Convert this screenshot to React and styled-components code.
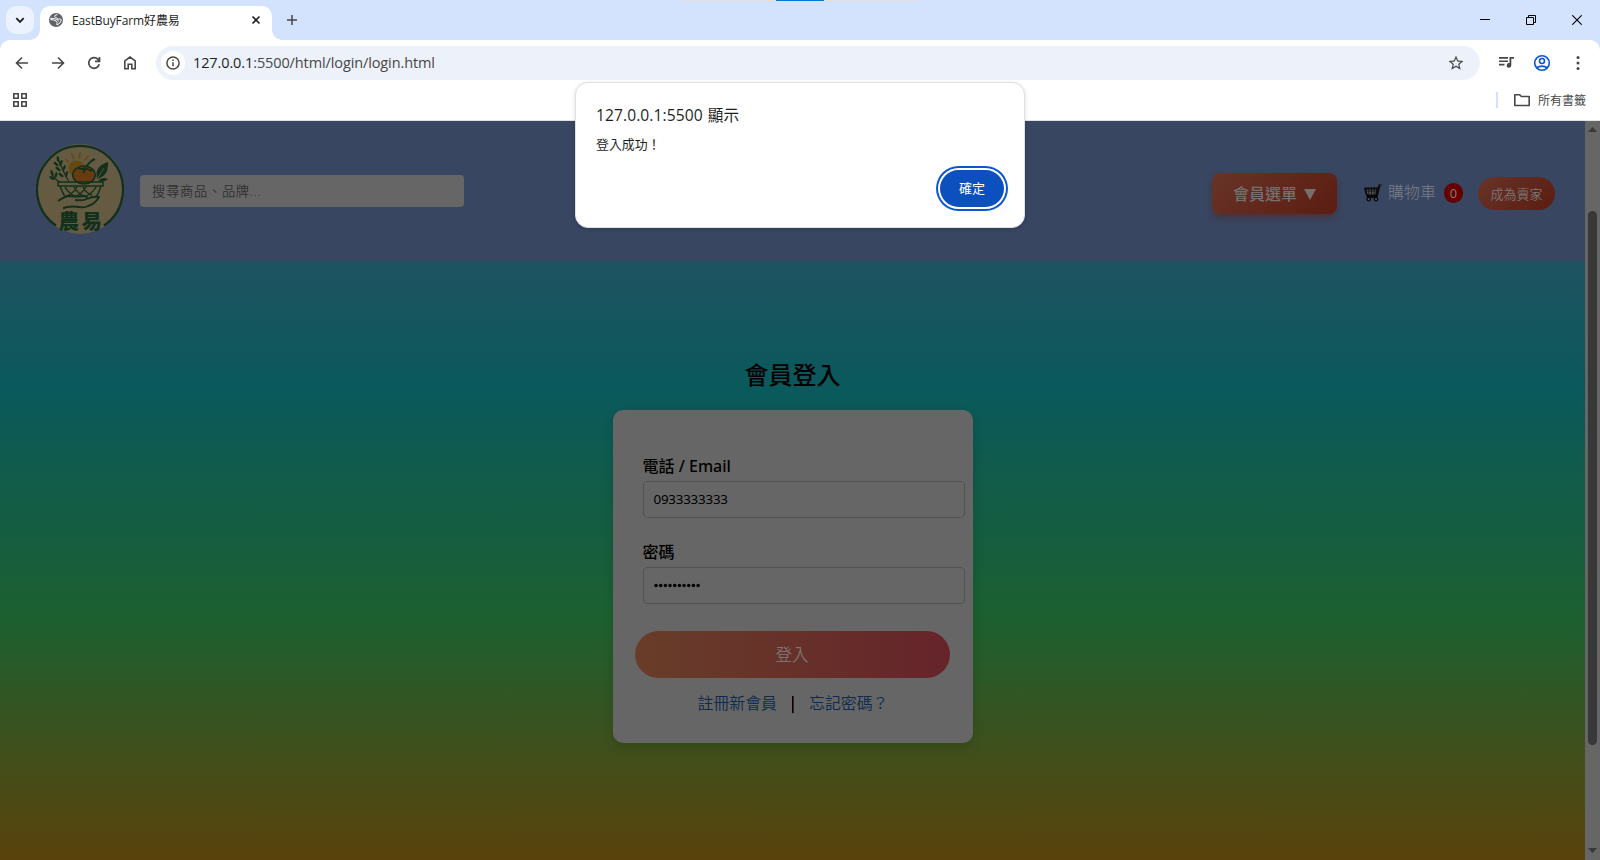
import React from "react";
import styled, { createGlobalStyle } from "styled-components";

const Global = createGlobalStyle`
  * { box-sizing: border-box; }
  body { margin: 0; overflow: hidden; font-family: "Open Sans", "Noto Sans CJK TC", sans-serif; }
  svg { display: block; flex: none; }
`;

const Window = styled.div`
  position: relative;
  display: flex;
  flex-direction: column;
  width: 1600px;
  height: 860px;
  overflow: hidden;
  background: #d3e2fd;
`;

const CaptureBar = styled.div`
  position: absolute;
  top: 0;
  left: 680px;
  width: 241px;
  height: 1px;
  background: #e3e3e3;
  display: flex;
  padding-left: 96px;
  &::after { content: ""; width: 48px; background: #0078d7; }
`;

const TabStrip = styled.div`
  display: flex;
  height: 40px;
  padding-left: 6px;
  color: #1f1f1f;
`;

const TabSearch = styled.div`
  width: 28px;
  height: 28px;
  margin: 6px 6px 0 0;
  border-radius: 10px;
  background: #ecf2fe;
  display: grid;
  place-items: center;
`;

const Tab = styled.div`
  position: relative;
  display: flex;
  align-items: center;
  width: 232px;
  height: 34px;
  margin-top: 6px;
  padding: 0 10px 6px 9px;
  border-radius: 10px 10px 0 0;
  background: #fff;
  &::before, &::after {
    content: "";
    position: absolute;
    bottom: 0;
    width: 10px;
    height: 10px;
  }
  &::before { left: -10px; background: radial-gradient(circle at 0 0, transparent 9.5px, #fff 10px); }
  &::after { right: -10px; background: radial-gradient(circle at 100% 0, transparent 9.5px, #fff 10px); }
`;

const TabTitle = styled.span`
  flex: 1;
  margin: 2px 0 0 9px;
  font-size: 12px;
  line-height: 16px;
  letter-spacing: -0.12px;
  white-space: nowrap;
`;

const NewTab = styled.div`
  display: flex;
  padding: 14px 0 0 14px;
  color: #474747;
`;

const WindowButtons = styled.div`
  display: flex;
  margin-left: auto;
  color: #000;
  > span { width: 46px; height: 39px; display: grid; place-items: center; }
`;

const Toolbar = styled.div`
  display: flex;
  align-items: center;
  height: 46px;
  padding: 0 12px 0 12px;
  background: #fff;
  border-radius: 10px 10px 0 0;
`;

const NavButtons = styled.div`
  display: flex;
  gap: 16px;
  width: 144px;
  color: #474747;
`;

const Omnibox = styled.div`
  display: flex;
  align-items: center;
  width: 1324px;
  height: 34px;
  padding: 0 15px 0 5px;
  border-radius: 17px;
  background: #ecf1fa;
  color: #474747;
`;

const SiteInfo = styled.span`
  width: 24px;
  height: 24px;
  border-radius: 50%;
  background: #fff;
  display: grid;
  place-items: center;
`;

const Url = styled.span`
  flex: 1;
  margin-left: 8px;
  font-size: 14.5px;
  line-height: 20px;
  letter-spacing: -0.11px;
  b { font-weight: 400; color: #1f1f1f; }
`;

const ToolbarActions = styled.div`
  display: flex;
  flex: 1;
  justify-content: space-between;
  align-items: center;
  padding-left: 16px;
  color: #474747;
`;

const Bookmarks = styled.div`
  display: flex;
  align-items: center;
  height: 35px;
  padding: 0 14px 6px 10px;
  background: #fff;
  border-bottom: 1px solid #e0e3e1;
  color: #474747;
`;

const BookmarkDivider = styled.i`
  width: 2px;
  height: 16px;
  margin: 0 14px 0 auto;
  background: #d3e3fd;
`;

const BookmarkLabel = styled.span`
  margin: 1px 0 0 6px;
  font-size: 12px;
  line-height: 16px;
`;

const Viewport = styled.div`
  display: flex;
  flex: 1;
`;

const Page = styled.main`
  width: 1585px;
  display: flex;
  flex-direction: column;
`;

const Header = styled.header`
  display: flex;
  align-items: center;
  height: 140px;
  padding: 0 30px 0 36px;
  background: #384662;
  color: #7a7f88;
`;

const SearchBox = styled.div`
  width: 324px;
  height: 32px;
  margin: -1px auto 0 16px;
  padding: 0 12px;
  border-radius: 4px;
  background: #666;
  color: #303030;
  font-size: 13.33px;
  line-height: 32px;
  font-weight: 350;
  letter-spacing: 0.65px;
`;

const MemberMenu = styled.div`
  width: 125px;
  height: 41px;
  margin-top: 5px;
  border-radius: 8px;
  background: linear-gradient(135deg, #673428, #5c1c11);
  box-shadow: 0 4px 6px rgba(92, 28, 17, 0.45);
  color: #74706f;
  font-size: 16px;
  font-weight: 500;
  line-height: 42px;
  text-align: center;
`;

const MenuArrow = styled.span`
  display: inline-block;
  margin-left: 7px;
  border: 6px solid transparent;
  border-top: 11px solid #74706f;
  border-bottom: 0;
`;

const Cart = styled.div`
  display: flex;
  align-items: center;
  width: 114px;
  margin: 4px 0 0 27px;
  font-size: 16px;
  font-weight: 300;
`;

const CartText = styled.span`
  margin: -3px 8px 0 6px;
  line-height: 24px;
`;

const CartCount = styled.span`
  width: 19px;
  height: 20px;
  border-radius: 10px;
  background: #660000;
  color: #8a7a7a;
  font-size: 12.8px;
  font-weight: 400;
  line-height: 20px;
  text-align: center;
`;

const SellerButton = styled.div`
  width: 77px;
  height: 33px;
  margin-top: 5px;
  border-radius: 17px;
  background: linear-gradient(135deg, #673428, #5c1c11);
  color: #7b7776;
  font-size: 13px;
  font-weight: 350;
  line-height: 34px;
  text-align: center;
`;

const Body = styled.section`
  flex: 1;
  display: flex;
  flex-direction: column;
  align-items: center;
  background: linear-gradient(#1f5361 0, #0a595c 127px, #1c6030 357px, #454d18 511px, #5a420c 599px);
`;

const Heading = styled.h2`
  margin: 94px 0 15px;
  font-size: 24px;
  line-height: 40px;
  font-weight: 500;
  color: #000;
`;

const Card = styled.div`
  width: 360px;
  height: 333px;
  padding: 44px 22px 0;
  border-radius: 10px;
  background: #666;
  box-shadow: 0 4px 12px rgba(0, 0, 0, 0.14);
  color: #000;
`;

const Field = styled.div`
  margin: 0 -14px 22px 8px;
`;

const Label = styled.div`
  font-family: "Noto Sans", "Noto Sans CJK TC", sans-serif;
  font-size: 16px;
  font-weight: 500;
  line-height: 24px;
  margin-bottom: 3px;
`;

const Input = styled.div`
  width: 322px;
  height: 37px;
  padding: 0 10px;
  border: 1px solid #525252;
  border-radius: 4px;
  font-family: "Noto Sans", sans-serif;
  font-size: 13.33px;
  line-height: 35px;
  letter-spacing: -0.2px;
`;

const PasswordDots = styled.svg`
  margin-top: 15px;
`;

const Submit = styled.div`
  width: 315px;
  height: 47px;
  margin: 27px 0 12px;
  border-radius: 24px;
  background: linear-gradient(90deg, #683d29, #66242a);
  color: #7d7372;
  font-size: 16.5px;
  line-height: 47px;
  text-align: center;
  font-weight: 350;
`;

const Links = styled.div`
  display: flex;
  justify-content: center;
  width: 317px;
  font-size: 15.9px;
  line-height: 26px;
  font-weight: 350;
  color: #0c2b4d;
`;

const LinkDivider = styled.i`
  width: 2px;
  height: 17px;
  margin: 6px 15px 0 15px;
  border-left: 1px solid #0a0006;
  background: #3c1a22;
`;

const Scrollbar = styled.div`
  width: 15px;
  display: flex;
  flex-direction: column;
  align-items: center;
  padding: 6px 0 7px;
  background: #666;
`;

const Thumb = styled.div`
  width: 9px;
  height: 534px;
  margin: 79px 0 auto;
  border-radius: 5px;
  background: #383838;
`;

const Dialog = styled.div`
  position: absolute;
  left: 575px;
  top: 82px;
  width: 450px;
  height: 146px;
  padding: 20px 20px 0;
  border: 1px solid #dfe1e3;
  border-radius: 13px;
  background: #fff;
  box-shadow: 0 1px 4px rgba(0, 0, 0, 0.14);
  color: #1f1f1f;
`;

const DialogTitle = styled.div`
  font-size: 15.6px;
  line-height: 24px;
  letter-spacing: 0.08px;
  word-spacing: 1px;
`;

const DialogText = styled.div`
  margin-top: 7px;
  font-size: 12.9px;
  line-height: 20px;
`;

const ConfirmButton = styled.div`
  width: 64px;
  height: 37px;
  margin: 16px 0 0 auto;
  border-radius: 19px;
  background: #0b50bd;
  box-shadow: 0 0 0 2px #fff, 0 0 0 4px #0b57d0;
  color: #fff;
  font-size: 13px;
  font-weight: 400;
  line-height: 37px;
  text-align: center;
`;

const Stroke = ({ size = 20, w = 2, box = 24, children }) => (
  <svg width={size} height={size} viewBox={`0 0 ${box} ${box}`} fill="none" stroke="currentColor" strokeWidth={w}>
    {children}
  </svg>
);
const Fill = ({ size = 20, d }) => (
  <svg width={size} height={size} viewBox="0 0 24 24" fill="currentColor"><path d={d} /></svg>
);

const LogoArt = styled.svg`
  margin-top: -4px;
`;

function Logo() {
  const leaf = (x, y, r, k) => (
    <ellipse key={k} cx={x} cy={y} rx="1.3" ry="3.1" transform={`rotate(${r} ${x} ${y})`} fill="#12301b" />
  );
  return (
    <LogoArt width="88" height="90" viewBox="0 0 88 90">
      <ellipse cx="44" cy="45" rx="44" ry="45" fill="#655b43" />
      <path d="M20 81.500 A43 43.500 0 1 1 68 81.500" fill="none" stroke="#12301b" strokeWidth="2.2" />
      <g stroke="#674910" strokeWidth="1.6" strokeLinecap="round">
        <path d="M30 15.500l2.500 2.500M35.500 9.500l2 5M44.200 9l-.8 5M52 12l-3 4" />
      </g>
      <circle cx="40.500" cy="24.500" r="8" fill="#674910" />
      <ellipse cx="48" cy="31" rx="11.200" ry="9" fill="#663c10" stroke="#12301b" strokeWidth="1.500" />
      <path d="M42 24q4 2 7 0q4 2 7 3M49 24q0 3-2 5M50 23q4-6 9-8" fill="none" stroke="#12301b" strokeWidth="1.900" />
      <path d="M61 35q-3-13 11-17q1 14-11 17M62 37q4-5 10-2q-4 4-10 2" fill="#12301b" />
      <path d="M61 35l7-11" stroke="#655b43" strokeWidth=".8" />
      <path d="M33 38Q27 27 21.500 14M24 38Q19 36 15 29" fill="none" stroke="#12301b" strokeWidth="1.200" />
      {[[22, 15, -10], [20, 20, -50], [25, 19, 25], [22, 25, -50], [28, 24, 25], [25, 31, -50], [30.500, 30, 20], [16, 29, -20], [16, 34, -60], [20, 31, 15]].map((a, i) => leaf(...a, i))}
      <g fill="none" stroke="#12301b" strokeWidth="1.900" strokeLinejoin="round">
        <path d="M22 38H67v4H22zM24 42q2 6 5 11M65 42q-2 7-5 11M29 43q4 7 12 10M38 43q4 7 12 10M47 43q4 7 9 8M41 43q-4 7-11 9M50 43q-4 7-12 10M60 43q-4 7-12 10" strokeWidth="1.500" />
        <path d="M22 57q7-5 12-5q7 1 13 0q4 0 4 2q-1 3-12 2M51 55q6-3 12-2q-4 7-11 9q-3 2-9 1q-6-1-12 0q-3 1-4 1" fill="#655b43" />
      </g>
      <text x="22.500" y="84.500" fontFamily="Noto Sans CJK TC, sans-serif" fontSize="20.500" fontWeight="900" fill="#12301b" letterSpacing="2.500">農易</text>
    </LogoArt>
  );
}

function CartIcon() {
  return (
    <svg width="18" height="18" viewBox="0 0 18 18">
      <path d="M1 4.500h12.500L12 11.500H3z" fill="#55585b" stroke="#090a0b" strokeWidth="1.800" strokeLinejoin="round" />
      <path d="M4.800 4.500v6.500M7.500 4.500v6.500M10.200 4.500v6.500M2 7h11" stroke="#090a0b" strokeWidth=".8" />
      <path d="M17 1.300h-1.500L12.600 13H3.500" fill="none" stroke="#090a0b" strokeWidth="2" strokeLinecap="round" />
      <circle cx="4.700" cy="15.200" r="2.300" fill="#090a0b" /><circle cx="12" cy="15.200" r="2.300" fill="#090a0b" />
      <circle cx="4.700" cy="15.200" r="1" fill="#55585c" /><circle cx="12" cy="15.200" r="1" fill="#55585c" />
      <path d="M15.700 1.300h1.800" stroke="#65352f" strokeWidth="1.200" />
    </svg>
  );
}

export default function App() {
  return (
    <Window>
      <Global />
      <TabStrip>
        <TabSearch><Stroke size={10} box={10} w={1.8}><path d="M1.300 3.200L5 6.900l3.700-3.700" /></Stroke></TabSearch>
        <Tab>
          <svg width="14" height="14" viewBox="0 0 14 14">
            <circle cx="7" cy="7" r="7" fill="#5f6368" />
            <path d="M8.400 1.600Q5.300 1.800 5.700 3.800q.4 1 1.700.8q.5 1.500 2.100 1.400q1.700-.3 2.900.7q-.2 3.400-4.400 5.300q-.6-1.200.3-2.200Q7.500 7.300 4.500 7L1.700 6.500l.2-1.300q2 .6 4.400.7q3 .6 3.300 2.500" fill="none" stroke="#fff" strokeWidth="1" />
          </svg>
          <TabTitle>EastBuyFarm好農易</TabTitle>
          <Stroke size={12} box={12} w={1.6}><path d="M2.500 2.500l7 7M9.500 2.500l-7 7" /></Stroke>
        </Tab>
        <NewTab><Stroke size={12} box={12} w={1.500}><path d="M6 1v10M1 6h10" /></Stroke></NewTab>
        <WindowButtons>
          <span><Stroke size={10} box={10} w={1}><path d="M0 4.500h10" /></Stroke></span>
          <span><Stroke size={10} box={10} w={1}><path d="M.5 2.500h7v7h-7zM2.500 2.500v-2h7v7h-2" /></Stroke></span>
          <span><Stroke size={10} box={10} w={1.100}><path d="M.3.300l9.400 9.400M9.700.3l-9.400 9.400" /></Stroke></span>
        </WindowButtons>
      </TabStrip>
      <Toolbar>
        <NavButtons>
          <Stroke box={20} w={1.600}><path d="M16 10H4.800M10 4.500L4.500 10l5.500 5.500" /></Stroke>
          <Stroke box={20} w={1.600}><path d="M4 10h11.200M10 4.500l5.500 5.500-5.500 5.500" /></Stroke>
          <Stroke box={20} w={1.700}><path d="M15.200 11.200A5.300 5.300 0 1 1 13.800 6.200L15.500 8M15.500 4v4.400H11" /></Stroke>
          <Stroke box={20} w={1.600}><path d="M4.800 15.800V7.900L10 4l5.200 3.900v7.900h-3.400v-4.600H8.200v4.600z" /></Stroke>
        </NavButtons>
        <Omnibox>
          <SiteInfo><Stroke size={16} box={16} w={1.500}><circle cx="8" cy="8" r="6.100" /><path d="M8 7.200v4M8 4.500v1.500" /></Stroke></SiteInfo>
          <Url><b>127.0.0.1</b>:5500/html/login/login.html</Url>
          <Fill size={18} d="M22 9.240l-7.190-.62L12 2 9.190 8.630 2 9.240l5.460 4.730L5.820 21 12 17.270 18.180 21l-1.630-7.030L22 9.240zM12 15.400l-3.760 2.270 1-4.280-3.320-2.880 4.380-.38L12 6.100l1.710 4.040 4.380.38-3.320 2.880 1 4.280L12 15.400z" />
        </Omnibox>
        <ToolbarActions>
          <svg width="20" height="20" viewBox="0 0 20 20" fill="currentColor"><path d="M3 4h9v1.700H3zM3 7.400h9v1.700H3zM3 10.800h5.500v1.700H3zM13.500 4H18v1.800h-2.700v6.500a2.300 2.300 0 1 1-1.800-2.200z" /></svg>
          <svg width="20" height="20" viewBox="0 0 20 20" fill="none" stroke="#0b57d0" strokeWidth="1.600"><circle cx="10" cy="10" r="7.300" /><circle cx="10" cy="8" r="2.500" /><path d="M4.600 14.800q5.400-3.400 10.800 0" /></svg>
          <svg width="20" height="20" viewBox="0 0 20 20" fill="currentColor"><circle cx="10" cy="4.500" r="1.500" /><circle cx="10" cy="10" r="1.500" /><circle cx="10" cy="15.500" r="1.500" /></svg>
        </ToolbarActions>
      </Toolbar>
      <Bookmarks>
        <Stroke box={20} w={1.600}><path d="M3.800 3.800h4.400v4.400H3.800zM11.800 3.800h4.400v4.400h-4.400zM3.800 11.800h4.400v4.400H3.800zM11.800 11.800h4.400v4.400h-4.400z" /></Stroke>
        <BookmarkDivider />
        <Stroke box={20} w={1.600}><path d="M2.800 4.800h4.900l1.700 1.700h7.800v9H2.800z" strokeLinejoin="round" /></Stroke>
        <BookmarkLabel>所有書籤</BookmarkLabel>
      </Bookmarks>
      <Viewport>
        <Page>
          <Header>
            <Logo />
            <SearchBox>搜尋商品、品牌...</SearchBox>
            <MemberMenu>會員選單<MenuArrow /></MemberMenu>
            <Cart><CartIcon /><CartText>購物車</CartText><CartCount>0</CartCount></Cart>
            <SellerButton>成為賣家</SellerButton>
          </Header>
          <Body>
            <Heading>會員登入</Heading>
            <Card>
              <Field><Label>電話 / Email</Label><Input>0933333333</Input></Field>
              <Field>
                <Label>密碼</Label>
                <Input>
                  <PasswordDots width="48" height="5" viewBox="0 0 48 5">
                    {Array.from({ length: 10 }, (_, i) => <circle key={i} cx={2 + i * 4.68} cy="2.500" r="1.750" />)}
                  </PasswordDots>
                </Input>
              </Field>
              <Submit>登入</Submit>
              <Links><span>註冊新會員</span><LinkDivider /><span>忘記密碼？</span></Links>
            </Card>
          </Body>
        </Page>
        <Scrollbar>
          <svg width="9" height="5" viewBox="0 0 9 5"><path d="M0 5L4.500 0 9 5z" fill="#383838" /></svg>
          <Thumb />
          <svg width="9" height="5" viewBox="0 0 9 5"><path d="M0 0h9L4.500 5z" fill="#383838" /></svg>
        </Scrollbar>
      </Viewport>
      <CaptureBar />
      <Dialog>
        <DialogTitle>127.0.0.1:5500 顯示</DialogTitle>
        <DialogText>登入成功！</DialogText>
        <ConfirmButton>確定</ConfirmButton>
      </Dialog>
    </Window>
  );
}
